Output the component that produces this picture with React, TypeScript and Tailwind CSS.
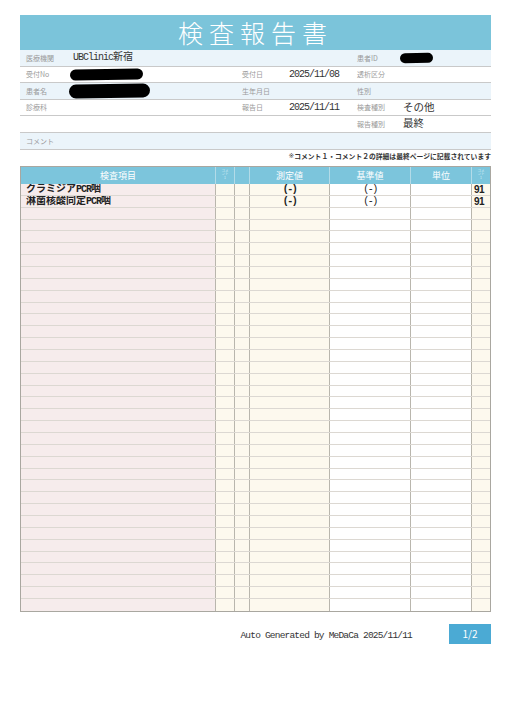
import React from "react";

const MONO = "font-['Liberation_Mono','Noto_Sans_CJK_JP',monospace]";
const JP = "font-['Noto_Sans_CJK_JP',sans-serif]";

function M({ s }: { s: string }) {
  const parts = s.match(/[\x20-\x7e]+|[^\x20-\x7e]+/g) || [];
  return (
    <>
      {parts.map((p, i) =>
        /^[\x20-\x7e]+$/.test(p) ? (
          <span key={i} className="tracking-[-0.1em]">
            {p}
          </span>
        ) : (
          <span key={i}>{p}</span>
        )
      )}
    </>
  );
}

function Blob({ w, h, ml = 0 }: { w: number; h: number; ml?: number }) {
  return (
    <div
      className="bg-black rounded-full"
      style={{ width: w, height: h, marginLeft: ml, transform: "rotate(-1deg)" }}
    />
  );
}

type Cell = [string, React.ReactNode];

function InfoRow({ bg, c1, c2, c3 }: { bg: boolean; c1: Cell; c2: Cell; c3: Cell }) {
  return (
    <div
      className={`h-[16.6px] flex items-center border-b border-[#c9c9c9] ${bg ? "bg-[#ebf4fa]" : "bg-white"}`}
    >
      <div className="w-[222px] flex items-center pl-[6px]">
        <div className={`w-[47px] text-[7px] text-[#9a9a9a] ${JP}`}>{c1[0]}</div>
        <div className={`flex-1 text-[10px] text-[#333] ${MONO}`}>{c1[1]}</div>
      </div>
      <div className="w-[115px] flex items-center">
        <div className={`w-[47px] text-[7px] text-[#9a9a9a] ${JP}`}>{c2[0]}</div>
        <div className={`flex-1 text-[10px] text-[#333] ${MONO}`}>{c2[1]}</div>
      </div>
      <div className="flex-1 flex items-center">
        <div className={`w-[46px] text-[7px] text-[#9a9a9a] ${JP}`}>{c3[0]}</div>
        <div className={`flex-1 text-[10.5px] text-[#333] ${MONO}`}>{c3[1]}</div>
      </div>
    </div>
  );
}

const colW = ["w-[195px]", "w-[19px]", "w-[15px]", "w-[80px]", "w-[81px]", "w-[61px]", "w-[18px]"];
const colBg = [
  "bg-[#f6ecec]",
  "bg-[#fdf9ee]",
  "bg-[#fdf9ee]",
  "bg-[#fdf9ee]",
  "bg-white",
  "bg-white",
  "bg-[#fdf9ee]",
];

function Tiny() {
  return (
    <div className={`flex flex-col items-center leading-[3.5px] text-[3.5px] text-[#d6eef6] ${JP}`}>
      <span>コメ</span>
      <span>ント</span>
      <span>1</span>
    </div>
  );
}

const data: { item: string; val: string; ref: string; c2: string }[] = [
  { item: "クラミジアPCR咽", val: "(-)", ref: "(-)", c2: "91" },
  { item: "淋菌核酸同定PCR咽", val: "(-)", ref: "(-)", c2: "91" },
];

export default function App() {
  const rows = Array.from({ length: 36 }, (_, i) => data[i]);
  return (
    <div className="w-[510px] h-[723px] bg-white overflow-hidden">
      <div className="ml-[20px] w-[471px] pt-[15px]">
        <div
          className={`h-[35px] bg-[#7bc4da] flex items-center justify-center text-white text-[25px] tracking-[6px] font-light ${JP}`}
        >
          検査報告書
        </div>

        <InfoRow
          bg
          c1={["医療機関", <M s="UBClinic新宿" />]}
          c2={["", ""]}
          c3={["患者ID", <Blob w={33} h={10} ml={-3} />]}
        />
        <InfoRow
          bg={false}
          c1={["受付No", <Blob w={73} h={11} ml={-3} />]}
          c2={["受付日", <M s="2025/11/08" />]}
          c3={["透析区分", ""]}
        />
        <InfoRow
          bg
          c1={["患者名", <Blob w={81} h={14} ml={-4} />]}
          c2={["生年月日", ""]}
          c3={["性別", ""]}
        />
        <InfoRow
          bg={false}
          c1={["診療科", ""]}
          c2={["報告日", <M s="2025/11/11" />]}
          c3={["検査種別", <span className={JP}>その他</span>]}
        />
        <InfoRow
          bg={false}
          c1={["", ""]}
          c2={["", ""]}
          c3={["報告種別", <span className={JP}>最終</span>]}
        />
        <div className="h-[16.6px] flex items-center border-b border-[#c9c9c9] bg-[#ebf4fa] pl-[6px]">
          <span className={`text-[7px] text-[#9a9a9a] ${JP}`}>コメント</span>
        </div>

        <div
          className={`h-[16.4px] flex justify-end items-start pt-[1px] text-[6.8px] leading-[10px] font-bold text-[#333] ${JP}`}
        >
          <span className="font-['DejaVu_Sans',sans-serif] font-normal text-[#333]">{"\u203B\uFE0E"}</span>
          コメント１・コメント２の詳細は最終ページに記載されています
        </div>

        <div className="border border-[#a9a7a0]">
          <div className={`h-[17px] flex bg-[#7cc5dc] text-white text-[9px] ${JP}`}>
            <div className={`${colW[0]} border-r border-[#b3dbe8] flex items-center justify-center`}>検査項目</div>
            <div className={`${colW[1]} border-r border-[#b3dbe8] flex items-start justify-center pt-[2px]`}>
              <Tiny />
            </div>
            <div className={`${colW[2]} border-r border-[#b3dbe8]`} />
            <div className={`${colW[3]} border-r border-[#b3dbe8] flex items-center justify-center`}>測定値</div>
            <div className={`${colW[4]} border-r border-[#b3dbe8] flex items-center justify-center`}>基準値</div>
            <div className={`${colW[5]} border-r border-[#b3dbe8] flex items-center justify-center`}>単位</div>
            <div className={`${colW[6]} flex items-start justify-center pt-[2px]`}>
              <Tiny />
            </div>
          </div>
          {rows.map((r, i) => (
            <div key={i} className={`h-[11.86px] flex ${i < 35 ? "border-b border-[#dcd8d2]" : ""}`}>
              {colW.map((w, j) => (
                <div
                  key={j}
                  className={`${w} ${colBg[j]} ${j < 6 ? "border-r border-[#b9b6ad]" : ""} h-full flex items-center text-[10px] leading-[11px] text-[#222] overflow-hidden whitespace-nowrap`}
                >
                  {r && j === 0 && (
                    <span className={`pl-[5px] font-bold ${MONO}`}>
                      <M s={r.item} />
                    </span>
                  )}
                  {r && j === 3 && (
                    <span className={`w-full text-center font-bold tracking-[-1.5px] ${MONO}`}>{r.val}</span>
                  )}
                  {r && j === 4 && (
                    <span className={`w-full text-center tracking-[-1.5px] ${MONO}`}>{r.ref}</span>
                  )}
                  {r && j === 6 && (
                    <span className={`pl-[2px] font-bold tracking-[-0.5px] font-['Liberation_Sans',sans-serif]`}>
                      {r.c2}
                    </span>
                  )}
                </div>
              ))}
            </div>
          ))}
        </div>

        <div className="mt-[12px] flex justify-end items-center">
          <span className={`mt-[5px] text-[9.5px] tracking-[-0.8px] text-[#333] ${MONO}`}>
            Auto Generated by MeDaCa 2025/11/11
          </span>
          <div
            className={`ml-[37px] w-[42px] h-[20px] bg-[#4baad4] flex items-center justify-center text-white text-[10px] ${JP}`}
          >
            1/2
          </div>
        </div>
      </div>
    </div>
  );
}
